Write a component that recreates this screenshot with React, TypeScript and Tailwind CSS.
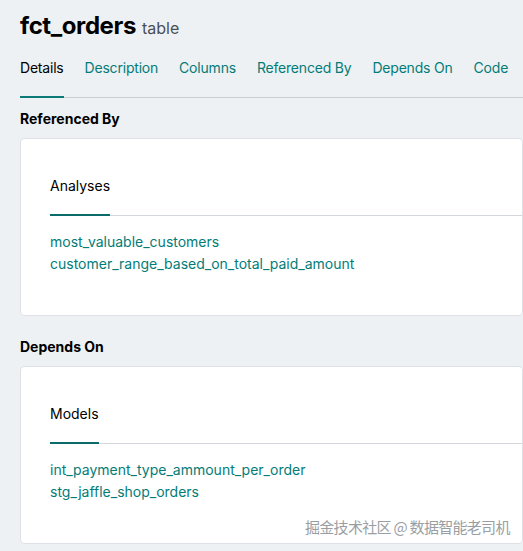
import React from "react"

const tabs = ["Details", "Description", "Columns", "Referenced By", "Depends On", "Code"]

function Section({ title, label, links }: { title: string; label: string; links: string[] }) {
    return (
        <section>
            <h3 className="text-[14px] font-bold leading-[20px] text-black mb-[9px]">{title}</h3>
            <div className="bg-white border border-[#dde1e5] rounded-[4px] pl-[29px] pt-[37px] pb-[40px] mr-[-20px]">
                <div className="border-b border-[#d3d7db] flex">
                    <div className="text-[14px] leading-[20px] text-black pb-[18px] border-b-2 border-[#0b6b6b] mb-[-1px]">
                        {label}
                    </div>
                </div>
                <ul className="mt-[15px] text-[14px] leading-[22px] text-[#037c78]">
                    {links.map((l) => (
                        <li key={l}>{l}</li>
                    ))}
                </ul>
            </div>
        </section>
    )
}

export default function App() {
    return (
        <div className="min-h-[551px] bg-[#eef1f4] px-5 pt-[11px] overflow-hidden font-['Inter',sans-serif] relative">
            <h1 className="flex items-baseline gap-[6px]">
                <span className="text-[24px] font-bold tracking-[-0.4px] text-black leading-[30px]">fct_orders</span>
                <span className="text-[16px] text-[#4a4f55]">table</span>
            </h1>
            <nav className="mt-[17px] flex gap-[21px] border-b border-[#c9ced3] mr-[-20px]">
                {tabs.map((t, i) => (
                    <div
                        key={t}
                        className={
                            "text-[14px] leading-[20px] tracking-[-0.2px] pb-[18px] mb-[-1px] " +
                            (i === 0 ? "text-black border-b-2 border-[#0b7b78]" : "text-[#037c78] border-b-2 border-transparent")
                        }
                    >
                        {t}
                    </div>
                ))}
            </nav>
            <div className="mt-[11px] flex flex-col gap-[21px]">
                <Section
                    title="Referenced By"
                    label="Analyses"
                    links={["most_valuable_customers", "customer_range_based_on_total_paid_amount"]}
                />
                <Section
                    title="Depends On"
                    label="Models"
                    links={["int_payment_type_ammount_per_order", "stg_jaffle_shop_orders"]}
                />
            </div>
            <div className="absolute left-[305px] top-[516px] text-[15px] text-[#9a9ea3] font-['Noto_Sans_CJK_SC',sans-serif] tracking-[-0.7px]">
                掘金技术社区 @ 数据智能老司机
            </div>
        </div>
    )
}
